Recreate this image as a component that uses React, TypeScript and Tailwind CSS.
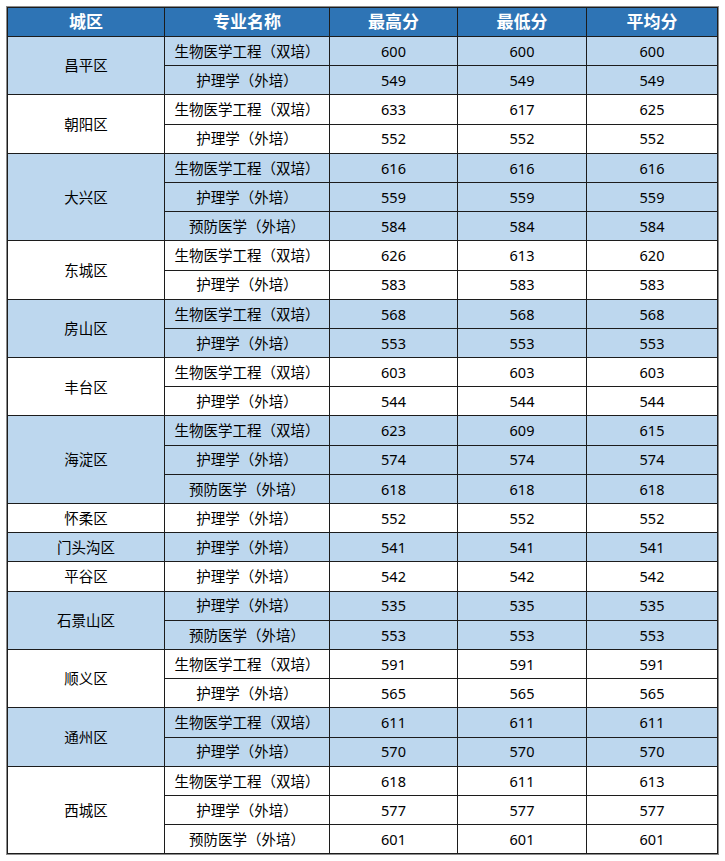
import React from 'react';

type Group = { district: string; rows: [string, number, number, number][] };

const SW = '生物医学工程（双培）';
const HL = '护理学（外培）';
const YF = '预防医学（外培）';

const DATA: Group[] = [
  { district: '昌平区', rows: [[SW, 600, 600, 600], [HL, 549, 549, 549]] },
  { district: '朝阳区', rows: [[SW, 633, 617, 625], [HL, 552, 552, 552]] },
  { district: '大兴区', rows: [[SW, 616, 616, 616], [HL, 559, 559, 559], [YF, 584, 584, 584]] },
  { district: '东城区', rows: [[SW, 626, 613, 620], [HL, 583, 583, 583]] },
  { district: '房山区', rows: [[SW, 568, 568, 568], [HL, 553, 553, 553]] },
  { district: '丰台区', rows: [[SW, 603, 603, 603], [HL, 544, 544, 544]] },
  { district: '海淀区', rows: [[SW, 623, 609, 615], [HL, 574, 574, 574], [YF, 618, 618, 618]] },
  { district: '怀柔区', rows: [[HL, 552, 552, 552]] },
  { district: '门头沟区', rows: [[HL, 541, 541, 541]] },
  { district: '平谷区', rows: [[HL, 542, 542, 542]] },
  { district: '石景山区', rows: [[HL, 535, 535, 535], [YF, 553, 553, 553]] },
  { district: '顺义区', rows: [[SW, 591, 591, 591], [HL, 565, 565, 565]] },
  { district: '通州区', rows: [[SW, 611, 611, 611], [HL, 570, 570, 570]] },
  { district: '西城区', rows: [[SW, 618, 611, 613], [HL, 577, 577, 577], [YF, 601, 601, 601]] },
];

const HEADERS = ['城区', '专业名称', '最高分', '最低分', '平均分'];

export default function App() {
  return (
    <div className="min-h-screen bg-white pl-[6px] pt-[6px] font-['Noto_Sans','Noto_Sans_CJK_SC',sans-serif]">
      <div className="w-[713px] border border-[#8c8c8c]">
        <table className="w-full table-fixed border-collapse text-[14.5px] text-black">
          <colgroup>
            <col className="w-[157px]" />
            <col className="w-[165px]" />
            <col className="w-[128px]" />
            <col className="w-[129px]" />
            <col />
          </colgroup>
          <thead>
            <tr className="h-[29px] bg-[#2e74b5]">
              {HEADERS.map((h) => (
                <th key={h} className="border border-[#1c1c1c] p-0 text-center text-[17px] font-bold text-white">
                  {h}
                </th>
              ))}
            </tr>
          </thead>
          <tbody>
            {DATA.map((g, gi) => {
              const bg = gi % 2 === 0 ? 'bg-[#bdd7ee]' : 'bg-white';
              return g.rows.map((r, ri) => (
                <tr key={g.district + ri} className={`h-[29.2px] ${bg}`}>
                  {ri === 0 && (
                    <td rowSpan={g.rows.length} className="border border-[#1c1c1c] p-0 text-center leading-none">
                      {g.district}
                    </td>
                  )}
                  <td className="border border-[#1c1c1c] p-0 text-center leading-none">{r[0]}</td>
                  <td className="border border-[#1c1c1c] p-0 text-center leading-none">{r[1]}</td>
                  <td className="border border-[#1c1c1c] p-0 text-center leading-none">{r[2]}</td>
                  <td className="border border-[#1c1c1c] p-0 text-center leading-none">{r[3]}</td>
                </tr>
              ));
            })}
          </tbody>
        </table>
      </div>
    </div>
  );
}
